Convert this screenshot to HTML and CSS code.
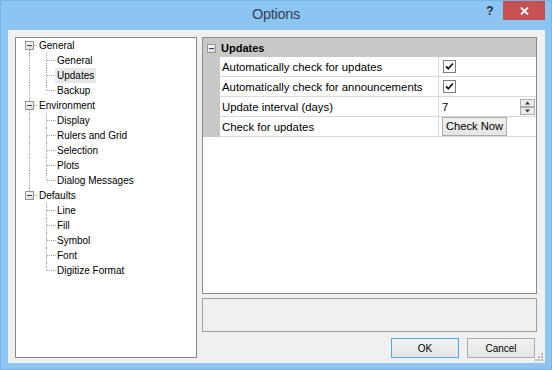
FILE: index.html
```html
<!DOCTYPE html>
<html>
<head>
<meta charset="utf-8">
<title>Options</title>
<link rel="stylesheet" href="styles.css">
</head>
<body>
<div class="window">
  <svg class="defs" width="0" height="0" aria-hidden="true">
    <defs>
      <linearGradient id="bxg" x1="0" y1="0" x2="1" y2="1">
        <stop offset="0" stop-color="#ffffff"/>
        <stop offset="1" stop-color="#d4d4d4"/>
      </linearGradient>
      <symbol id="box" viewBox="0 0 9 9">
        <rect x=".5" y=".5" width="8" height="8" fill="url(#bxg)" stroke="#969696"/>
        <path d="M2 4.5h5" stroke="#2a4470"/>
      </symbol>
      <symbol id="r-first" viewBox="0 0 22 15">
        <path d="M13.5 12V15M18 7.5H22" stroke="#a0a0a0" stroke-dasharray="1 1" fill="none"/>
        <use href="#box" x="9" y="3" width="9" height="9"/>
      </symbol>
      <symbol id="r-mid" viewBox="0 0 22 15">
        <path d="M13.5 0V3M13.5 12V15M18 7.5H22" stroke="#a0a0a0" stroke-dasharray="1 1" fill="none"/>
        <use href="#box" x="9" y="3" width="9" height="9"/>
      </symbol>
      <symbol id="r-last" viewBox="0 0 22 15">
        <path d="M13.5 0V3M18 7.5H22" stroke="#a0a0a0" stroke-dasharray="1 1" fill="none"/>
        <use href="#box" x="9" y="3" width="9" height="9"/>
      </symbol>
      <symbol id="pass" viewBox="0 0 22 15">
        <path d="M13.5 0V15" stroke="#a0a0a0" stroke-dasharray="1 1" fill="none"/>
      </symbol>
      <symbol id="c-mid" viewBox="0 0 18 15">
        <path d="M8.5 0V15M9 7.5H18" stroke="#a0a0a0" stroke-dasharray="1 1" fill="none"/>
      </symbol>
      <symbol id="c-last" viewBox="0 0 18 15">
        <path d="M8.5 0V8M9 7.5H18" stroke="#a0a0a0" stroke-dasharray="1 1" fill="none"/>
      </symbol>
      <symbol id="check" viewBox="0 0 13 13">
        <rect x=".5" y=".5" width="12" height="12" fill="#fff" stroke="#7c7c7c"/>
        <path d="M3 6.3l2.3 2.4 4.6-5.2" stroke="#111" stroke-width="1.7" fill="none"/>
      </symbol>
    </defs>
  </svg>

  <div class="titlebar">
    <div class="title">Options</div>
    <div class="caps">
      <span class="help">?</span>
      <span class="close">
        <svg width="9" height="8" viewBox="0 0 9 8"><path d="M1 0.5l7 7M8 0.5l-7 7" stroke="#fff" stroke-width="1.8"/></svg>
      </span>
    </div>
  </div>

  <div class="client">
    <div class="tree">
      <div class="node"><svg class="c0"><use href="#r-first"/></svg><span class="lbl">General</span></div>
      <div class="node"><svg class="c0"><use href="#pass"/></svg><svg class="c1"><use href="#c-mid"/></svg><span class="lbl">General</span></div>
      <div class="node"><svg class="c0"><use href="#pass"/></svg><svg class="c1"><use href="#c-mid"/></svg><span class="lbl sel">Updates</span></div>
      <div class="node"><svg class="c0"><use href="#pass"/></svg><svg class="c1"><use href="#c-last"/></svg><span class="lbl">Backup</span></div>
      <div class="node"><svg class="c0"><use href="#r-mid"/></svg><span class="lbl">Environment</span></div>
      <div class="node"><svg class="c0"><use href="#pass"/></svg><svg class="c1"><use href="#c-mid"/></svg><span class="lbl">Display</span></div>
      <div class="node"><svg class="c0"><use href="#pass"/></svg><svg class="c1"><use href="#c-mid"/></svg><span class="lbl">Rulers and Grid</span></div>
      <div class="node"><svg class="c0"><use href="#pass"/></svg><svg class="c1"><use href="#c-mid"/></svg><span class="lbl">Selection</span></div>
      <div class="node"><svg class="c0"><use href="#pass"/></svg><svg class="c1"><use href="#c-mid"/></svg><span class="lbl">Plots</span></div>
      <div class="node"><svg class="c0"><use href="#pass"/></svg><svg class="c1"><use href="#c-last"/></svg><span class="lbl">Dialog Messages</span></div>
      <div class="node"><svg class="c0"><use href="#r-last"/></svg><span class="lbl">Defaults</span></div>
      <div class="node"><svg class="c0"></svg><svg class="c1"><use href="#c-mid"/></svg><span class="lbl">Line</span></div>
      <div class="node"><svg class="c0"></svg><svg class="c1"><use href="#c-mid"/></svg><span class="lbl">Fill</span></div>
      <div class="node"><svg class="c0"></svg><svg class="c1"><use href="#c-mid"/></svg><span class="lbl">Symbol</span></div>
      <div class="node"><svg class="c0"></svg><svg class="c1"><use href="#c-mid"/></svg><span class="lbl">Font</span></div>
      <div class="node"><svg class="c0"></svg><svg class="c1"><use href="#c-last"/></svg><span class="lbl">Digitize Format</span></div>
    </div>

    <div class="side">
      <div class="grid">
        <div class="cat">
          <svg class="catbox" width="9" height="9"><use href="#box"/></svg>
          <span class="catname">Updates</span>
        </div>
        <div class="prow">
          <div class="gut"></div>
          <div class="pname">Automatically check for updates</div>
          <div class="pval"><svg class="chk" width="13" height="13"><use href="#check"/></svg></div>
        </div>
        <div class="prow">
          <div class="gut"></div>
          <div class="pname">Automatically check for announcements</div>
          <div class="pval"><svg class="chk" width="13" height="13"><use href="#check"/></svg></div>
        </div>
        <div class="prow">
          <div class="gut"></div>
          <div class="pname">Update interval (days)</div>
          <div class="pval num">
            <span class="numtxt">7</span>
            <svg class="spin" width="15" height="16" viewBox="0 0 15 16">
              <rect x=".5" y=".5" width="14" height="7" fill="#ececec" stroke="#acacac"/>
              <rect x=".5" y="8.5" width="14" height="7" fill="#ececec" stroke="#acacac"/>
              <path d="M5 5.5h5L7.5 2.5z" fill="#333"/>
              <path d="M5 10.5h5L7.5 13.5z" fill="#333"/>
            </svg>
          </div>
        </div>
        <div class="prow">
          <div class="gut"></div>
          <div class="pname">Check for updates</div>
          <div class="pval"><button class="btn-check">Check Now</button></div>
        </div>
      </div>
      <div class="desc"></div>
      <div class="actions">
        <button class="dlgbtn default">OK</button>
        <button class="dlgbtn">Cancel</button>
      </div>
    </div>

    <svg class="grip" width="10" height="10" viewBox="0 0 10 10">
      <g fill="#b4b4b4">
        <rect x="7" y="1" width="2" height="2"/>
        <rect x="4" y="4" width="2" height="2"/>
        <rect x="7" y="4" width="2" height="2"/>
        <rect x="1" y="7" width="2" height="2"/>
        <rect x="4" y="7" width="2" height="2"/>
        <rect x="7" y="7" width="2" height="2"/>
      </g>
    </svg>
  </div>
</div>
</body>
</html>
```
FILE: styles.css
```css
html, body {
  margin: 0;
  padding: 0;
}

body {
  width: 552px;
  height: 370px;
  overflow: hidden;
  font-family: "Liberation Sans", Arial, sans-serif;
  color: #000;
}

.window {
  width: 552px;
  height: 370px;
  box-sizing: border-box;
  background: #8cc4f3;
  border: 1px solid #78b2e6;
  display: flex;
  flex-direction: column;
}

.defs {
  display: block;
  width: 0;
  height: 0;
  overflow: hidden;
}

/* ---------- title bar ---------- */
.titlebar {
  height: 29px;
  flex: 0 0 auto;
  display: grid;
  grid-template-columns: 1fr auto 1fr;
  align-items: start;
}

.title {
  grid-column: 2;
  font-size: 14.5px;
  line-height: 27px;
  color: #34414f;
  letter-spacing: -0.3px;
}

.caps {
  grid-column: 3;
  justify-self: end;
  display: flex;
  align-items: flex-start;
}

.help {
  width: 20px;
  margin-right: 3px;
  margin-top: 1px;
  text-align: center;
  font-size: 12px;
  font-weight: bold;
  line-height: 19px;
  color: #222c36;
}

.close {
  width: 42px;
  height: 19px;
  margin-right: 6px;
  background: #c75050;
  display: flex;
  align-items: center;
  justify-content: center;
}

.close svg {
  display: block;
}

/* ---------- client ---------- */
.client {
  flex: 1 1 auto;
  margin: 0 6px 6px 7px;
  background: #f0f0f0;
  display: flex;
  gap: 5px;
  padding: 7px 8px 5px 7px;
  position: relative;
}

/* ---------- tree ---------- */
.tree {
  width: 182px;
  flex: 0 0 auto;
  box-sizing: border-box;
  background: #fff;
  border: 1px solid #828790;
}

.node {
  display: flex;
  align-items: flex-start;
  height: 15px;
}

.c0 {
  width: 22px;
  height: 15px;
  flex: 0 0 auto;
  display: block;
}

.c1 {
  width: 18px;
  height: 15px;
  flex: 0 0 auto;
  display: block;
}

.lbl {
  margin-left: -1px;
  padding: 0 2px;
  font-size: 10px;
  line-height: 15px;
  white-space: nowrap;
}

.lbl.sel {
  background: #e8e8e8;
}

/* ---------- right side ---------- */
.side {
  flex: 1 1 auto;
  display: flex;
  flex-direction: column;
  gap: 4px;
}

.grid {
  height: 257px;
  flex: 0 0 auto;
  box-sizing: border-box;
  border: 1px solid #8c8c8c;
  background: #fff;
  display: flex;
  flex-direction: column;
}

.cat {
  height: 19px;
  background: #c8c8c8;
  display: flex;
  align-items: center;
  padding-left: 4px;
}

.catbox {
  display: block;
  margin-top: 1px;
}

.catname {
  margin-left: 5px;
  font-size: 11px;
  font-weight: bold;
}

.prow {
  display: flex;
  height: 20px;
}

.gut {
  width: 17px;
  flex: 0 0 auto;
  background: #c8c8c8;
}

.pname {
  width: 216px;
  flex: 0 0 auto;
  border-right: 1px solid #dadada;
  border-bottom: 1px solid #dadada;
  padding: 1px 0 0 2px;
  height: 18px;
  font-size: 11.35px;
  line-height: 18px;
  white-space: nowrap;
}

.pval {
  flex: 1 1 auto;
  border-bottom: 1px solid #dadada;
  display: flex;
  align-items: center;
  padding-left: 4px;
}

.chk {
  display: block;
}

.pval.num {
  padding-left: 3px;
  justify-content: space-between;
  padding-right: 1px;
}

.numtxt {
  font-size: 11.35px;
  line-height: 18px;
  padding-top: 1px;
}

.spin {
  display: block;
}

.btn-check {
  margin: 0 0 0 -1px;
  padding: 0;
  width: 65px;
  height: 19px;
  align-self: flex-start;
  box-sizing: border-box;
  border: 1px solid #acacac;
  background: linear-gradient(#f0f0f0, #e5e5e5);
  font-family: "Liberation Sans", Arial, sans-serif;
  font-size: 11.2px;
  color: #000;
  line-height: 17px;
}

.desc {
  height: 34px;
  flex: 0 0 auto;
  box-sizing: border-box;
  border: 1px solid #a0a0a0;
  background: #f0f0f0;
}

.actions {
  display: flex;
  justify-content: flex-end;
  gap: 8px;
  padding-right: 2px;
  margin-top: 2px;
}

.dlgbtn {
  width: 68px;
  height: 20px;
  margin: 0;
  padding: 0;
  box-sizing: border-box;
  border: 1px solid #acacac;
  background: linear-gradient(#f0f0f0, #e5e5e5);
  font-family: "Liberation Sans", Arial, sans-serif;
  font-size: 10px;
  color: #000;
}

.dlgbtn.default {
  border-color: #4ea5f0;
}

.grip {
  position: absolute;
  right: 1px;
  bottom: 1px;
  display: block;
}
```
